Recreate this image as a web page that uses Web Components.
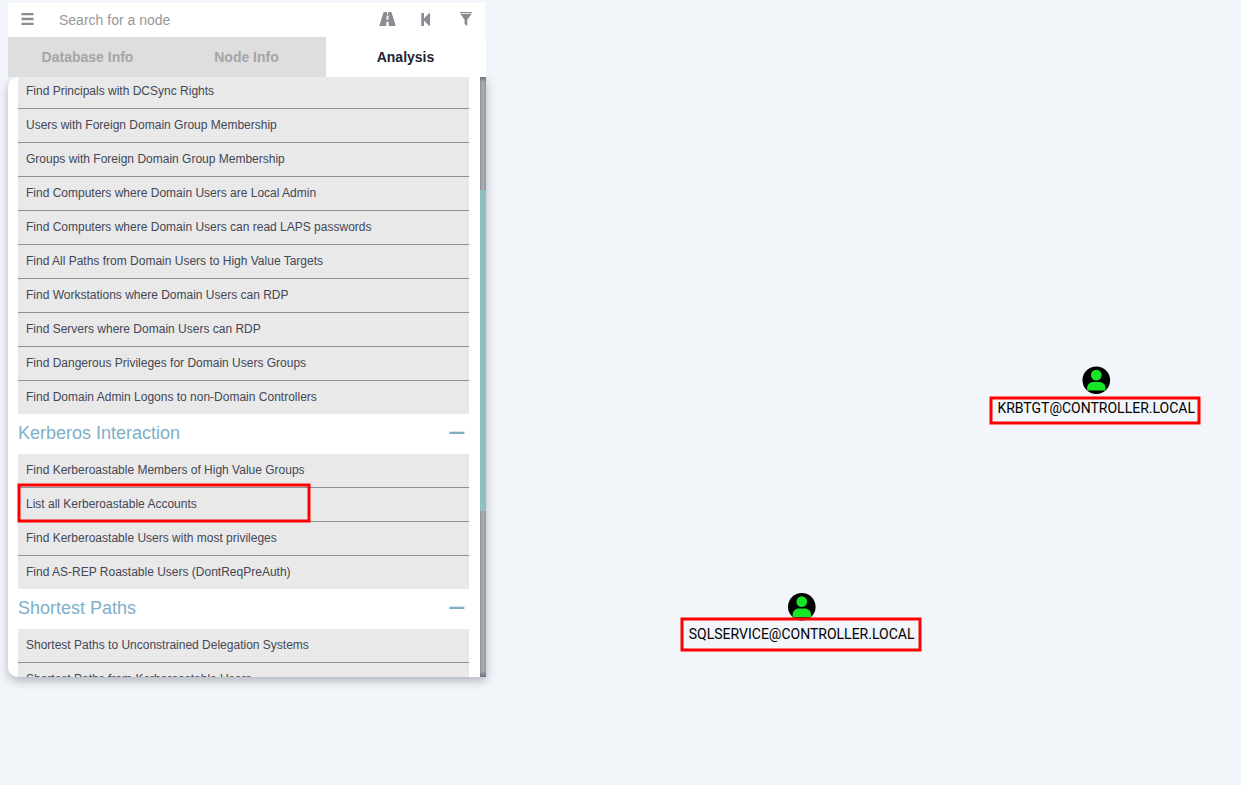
<!DOCTYPE html>
<html lang="en"><head><meta charset="utf-8"><title>Graph Analysis</title>
<style>
html,body{margin:0;height:100%;overflow:hidden;background:#f2f5fa;font-family:"Liberation Sans",Arial,sans-serif}
</style></head><body>
<graph-app></graph-app>
<script>
const define = (name, html, setup) => {
  const t = document.createElement('template');
  t.innerHTML = html;
  customElements.define(name, class extends HTMLElement {
    constructor() {
      super();
      this.attachShadow({ mode: 'open' }).append(t.content.cloneNode(true));
    }
    connectedCallback() { if (setup) setup(this, this.shadowRoot); }
  });
};

define('search-bar', `<style>
:host{display:flex;align-items:center;height:34px;width:477px;background:#fff;box-sizing:border-box;padding-left:13px}
svg{display:block;fill:#898c93;flex:none}
.q{font-size:14px;line-height:16px;color:#979797;margin-left:25px;flex:1}
.road{margin-right:25px}.back{margin-right:30px}.filter{margin-right:13px}
</style>
<svg width="13" height="34" viewBox="0 0 13 34"><path d="M.5 10h12v2.3H.5zM.5 14.8h12v2.4H.5zM.5 19.7h12V22H.5z"/></svg>
<span class="q">Search for a node</span>
<svg class="road" width="17" height="34" viewBox="0 0 17 34"><path d="M4.6 9h3.4l-.1 2.2h1.2L9 9h3.4l4.4 14H9.8l-.3-4.2h-2L7.2 23H.2zM7.7 12.6l-.2 4.2h2l-.2-4.2z" fill-rule="evenodd"/></svg>
<svg class="back" width="9" height="34" viewBox="0 0 9 34"><path d="M.3 10h2.7v5.5L8 10.2h1v12.6H8l-5-5.3V23H.3z"/></svg>
<svg class="filter" width="12" height="34" viewBox="0 0 12 34"><path d="M0 9h12v1.3H0zM.4 11h11.2L7.3 16.7V23l-2.7-1.9v-4.4z"/></svg>`);

define('tab-item', `<style>
:host{flex:1;display:flex;align-items:center;justify-content:center;background:#dedede;color:#a4a5a9;font-weight:bold;font-size:14px;line-height:20px}
:host([active]){background:#fff;color:#202434}
</style><slot></slot>`);

define('tab-bar', `<style>:host{display:flex;height:40px;width:477px;padding-right:1px;background:#fff}</style><slot></slot>`);

define('query-item', `<style>
:host{display:block;box-sizing:border-box;height:34px;padding:8px;border-bottom:1px solid #8e8f97;background:#e9e9e9;color:#434756;font-size:12px;line-height:17px;white-space:nowrap}
:host(:last-child){border-bottom:0;height:33px}
</style><slot></slot>`);

define('query-group', `<style>
:host{display:block}
header{height:40px;display:flex;align-items:center;justify-content:space-between;color:#7db0c7;font-size:18px;line-height:20px;box-sizing:border-box;padding:0 4px 2px 0}
:host(:not([heading])) header{display:none}
svg{display:block;fill:#7db0c7}
</style><header><span></span><svg width="16" height="4" viewBox="0 0 16 4"><path d="M.4 .7h15V3H.4z"/></svg></header><slot></slot>`,
(el, root) => { root.querySelector('span').textContent = el.getAttribute('heading') || ''; });

define('scroll-pane', `<style>
:host{display:flex;width:478px;height:600px;background:#fff;overflow:hidden;border-radius:10px 0 0 10px}
.list{width:451px;margin-left:10px;margin-top:-2px;flex:none}
.track{width:6px;margin-left:11px;padding-top:113px;box-sizing:border-box;background:linear-gradient(#6f737b,transparent 5px,transparent 594px,#6f737b),linear-gradient(90deg,#8d9197,#a3a7ac 35%,#a8abb0 60%,#8f9399)}
.thumb{height:321px;background:#8fbec3}
</style><div class="list"><slot></slot></div><div class="track"><div class="thumb"></div></div>`);

define('graph-node', `<style>
:host{position:absolute;display:flex;flex-direction:column;align-items:center;color:#000;font:14px/18px Roboto,sans-serif;white-space:nowrap}
svg{display:block;margin:0 0 5px}
</style><svg width="28" height="28" viewBox="0 0 28 28"><circle cx="14" cy="14" r="13.8"/><g fill="#17e625"><circle cx="14" cy="8.9" r="5.4"/><path d="M4.8 24.4v-2.1c0-4.2 2.8-6.5 6.4-6.5h5.6c3.6 0 6.4 2.3 6.4 6.5v2.1z"/></g></svg><slot></slot>`,
(el, root) => {
  const [x, y] = (el.getAttribute('nudge') || '0 0').split(' ');
  root.querySelector('svg').firstElementChild.parentNode.setAttribute('viewBox', `${-x} ${-y} 28 28`);
  root.querySelector('svg').style.overflow = 'visible';
});

define('mark-box', `<style>:host{position:absolute}svg{display:block;width:100%;height:100%;overflow:visible}rect{fill:none;stroke:#fe0000;stroke-width:3}</style><svg><rect width="100%" height="100%"/></svg>`);

define('graph-app', `<style>
:host{display:block;position:relative;height:785px;overflow:hidden}
.panel{padding:3px 0 0 8px;width:478px}
.shadow{border-radius:10px 0 0 10px;box-shadow:0 4px 10px rgba(30,40,50,.3)}
search-bar,tab-bar{position:relative;z-index:1}
.n1{left:997.4px;top:366px}.n2{left:688.8px;top:592.4px}
.m0{left:19px;top:485px;width:290px;height:36px}
.m1{left:991px;top:398px;width:208px;height:25px}
.m2{left:682px;top:619px;width:238px;height:31px}
</style>
<div class="panel">
<search-bar></search-bar>
<tab-bar><tab-item>Database Info</tab-item><tab-item>Node Info</tab-item><tab-item active>Analysis</tab-item></tab-bar>
<div class="shadow"><scroll-pane>
<query-group>
<query-item>Find Principals with DCSync Rights</query-item>
<query-item>Users with Foreign Domain Group Membership</query-item>
<query-item>Groups with Foreign Domain Group Membership</query-item>
<query-item>Find Computers where Domain Users are Local Admin</query-item>
<query-item>Find Computers where Domain Users can read LAPS passwords</query-item>
<query-item>Find All Paths from Domain Users to High Value Targets</query-item>
<query-item>Find Workstations where Domain Users can RDP</query-item>
<query-item>Find Servers where Domain Users can RDP</query-item>
<query-item>Find Dangerous Privileges for Domain Users Groups</query-item>
<query-item>Find Domain Admin Logons to non-Domain Controllers</query-item>
</query-group>
<query-group heading="Kerberos Interaction">
<query-item>Find Kerberoastable Members of High Value Groups</query-item>
<query-item>List all Kerberoastable Accounts</query-item>
<query-item>Find Kerberoastable Users with most privileges</query-item>
<query-item>Find AS-REP Roastable Users (DontReqPreAuth)</query-item>
</query-group>
<query-group heading="Shortest Paths">
<query-item>Shortest Paths to Unconstrained Delegation Systems</query-item>
<query-item>Shortest Paths from Kerberoastable Users</query-item>
</query-group>
</scroll-pane></div>
</div>
<graph-node class="n1" nudge="0.3 0.2">KRBTGT@CONTROLLER.LOCAL</graph-node>
<graph-node class="n2" nudge="-0.2 0.8">SQLSERVICE@CONTROLLER.LOCAL</graph-node>
<mark-box class="m0"></mark-box><mark-box class="m1"></mark-box><mark-box class="m2"></mark-box>`);
</script>
</body></html>
